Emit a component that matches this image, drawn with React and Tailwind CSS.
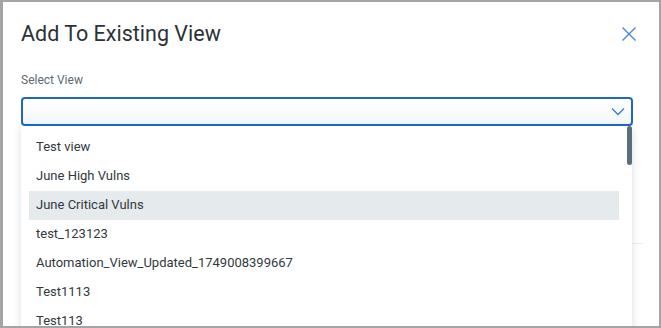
import { useState } from "react";

const views = [
  "Test view",
  "June High Vulns",
  "June Critical Vulns",
  "test_123123",
  "Automation_View_Updated_1749008399667",
  "Test1113",
  "Test113",
];

const CloseIcon = () => (
  <svg width="16" height="16" viewBox="0 0 16 16" fill="none">
    <path d="M1.5 1.5 L14.5 14.5 M14.5 1.5 L1.5 14.5" stroke="#4a89d2" strokeWidth="1.4" />
  </svg>
);

const Chevron = () => (
  <svg width="14" height="9" viewBox="0 0 14 9" fill="none">
    <path d="M1 1.5 L7 7.5 L13 1.5" stroke="#3c7bc8" strokeWidth="1.3" />
  </svg>
);

const App = () => {
  const [hover] = useState(2);

  return (
    <div
      className="w-[661px] h-[328px] bg-[#a4a4a4] pt-[2px] pl-[3px] pr-[2px] pb-[2px]"
      style={{ fontFamily: "Roboto, 'Liberation Sans', sans-serif" }}
    >
      <div className="relative h-full bg-white overflow-hidden">
        {/* En-tête */}
        <div className="flex items-start justify-between pl-[18px] pr-[22px] pt-[18px]">
          <h1 className="text-[21.5px] leading-[28px] text-[#2c3236] font-normal">
            Add To Existing View
          </h1>
          <button className="mt-[6px]">
            <CloseIcon />
          </button>
        </div>

        {/* Champ de sélection */}
        <div className="pl-[18px] pr-[26px] mt-[24px]">
          <div className="text-[12px] leading-[16px] text-[#5b6a74]">Select View</div>
          <div className="mt-[9px] h-[29px] w-[612px] rounded-[4px] border-2 border-[#2067c0] bg-gradient-to-b from-white to-[#f3f7fb] flex items-center justify-end pr-[6px]">
            <Chevron />
          </div>
        </div>

        <div className="mt-[117px] ml-[600px] w-[40px] h-px bg-[#eceff1]" />

        {/* Liste déroulante */}
        <div className="absolute left-[18px] top-[124px] w-[611px] h-[220px] bg-white shadow-[0_2px_8px_rgba(40,70,110,0.18)] pt-[7px]">
          <div className="absolute right-0 top-0 w-[5px] h-[39px] rounded-[3px] bg-[#5b6e7b]" />
          {views.map((v, i) => (
            <div
              key={v}
              className={`ml-[8px] mr-[13px] h-[29px] flex items-center pl-[7px] pb-[2px] text-[13px] text-[#32393e] ${
                i === hover ? "bg-[#e5eaec]" : ""
              }`}
            >
              {v}
            </div>
          ))}
        </div>
      </div>
    </div>
  );
};

export default App;
